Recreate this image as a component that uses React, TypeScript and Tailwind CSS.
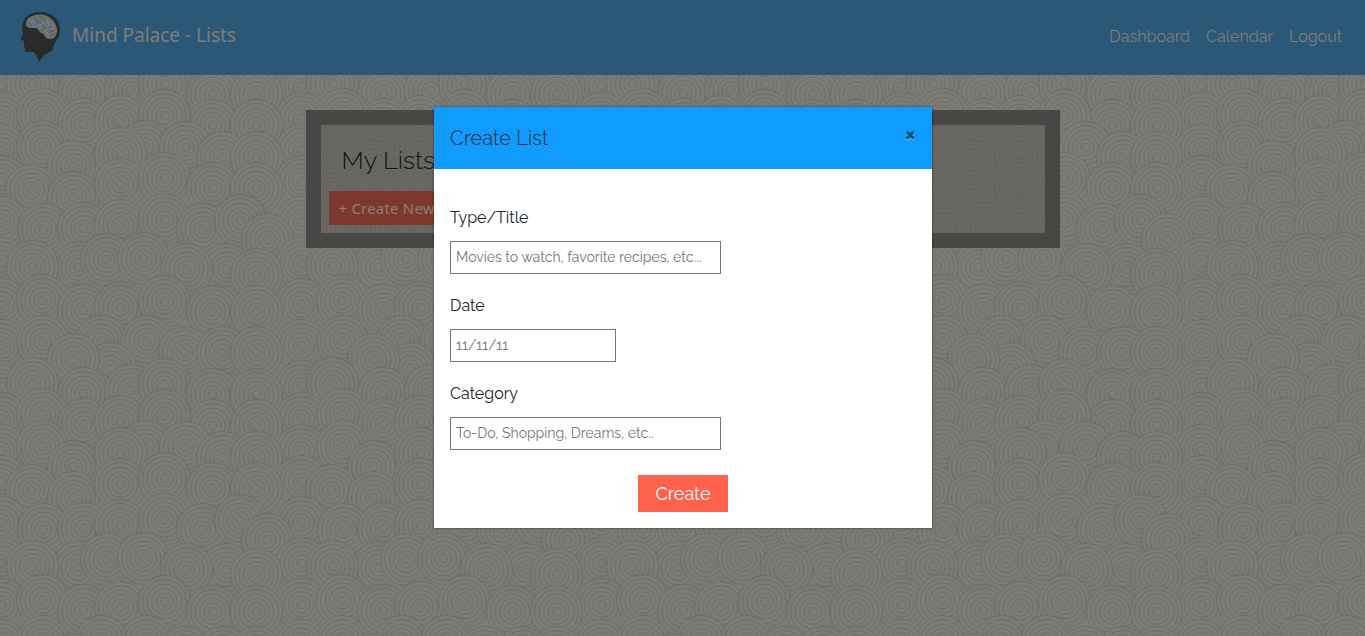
import React from "react";

type Ring = [number, number];

// Ring centres of one 300x300 wallpaper tile, listed from back to front.
const RINGS: Ring[] = [
  [1, 4], [42, 0], [83, 10], [120, 7], [164, 1], [212, 11], [256, 11],
  [1, 45], [42, 41], [101, 41], [146, 41], [110, 68], [184, 52], [222, 52], [256, 52], [73, 59],
  [1, 86], [32, 83], [83, 93], [130, 90], [164, 84], [212, 94], [256, 94],
  [1, 118], [42, 114], [83, 124], [120, 121], [212, 125], [164, 115], [256, 125],
  [1, 150], [42, 146], [145, 146], [185, 147], [73, 166], [120, 153], [222, 157], [256, 157],
  [1, 181], [31, 190], [73, 197], [120, 184], [164, 178], [212, 188], [256, 188],
  [1, 222], [43, 229], [83, 228], [120, 225], [164, 219], [202, 229], [240, 220], [267, 239],
  [1, 263], [78, 267], [32, 266], [106, 259], [143, 258], [226, 269], [186, 269], [256, 274],
];
const RADII = [26, 21.8, 17.3, 12.9, 8.6, 4.3];

function Wallpaper() {
  return (
    <svg className="absolute inset-0 h-full w-full" aria-hidden="true">
      <defs>
        <g id="ring">
          {RADII.map((r) => (
            <circle key={r} r={r} fill="#7d7b75" stroke="#6e6c67" strokeWidth="1" />
          ))}
        </g>
        <pattern id="rings" width="300" height="300" patternUnits="userSpaceOnUse">
          <rect width="300" height="300" fill="#7d7b75" />
          {[-300, 0, 300].map((dy) =>
            RINGS.map(([x, y], i) =>
              [300, -300, 0].map((dx) => (
                <use key={`${dy}-${i}-${dx}`} href="#ring" x={x + dx + 0.5} y={y + dy + 0.5} />
              )),
            ),
          )}
        </pattern>
      </defs>
      <rect width="100%" height="100%" fill="url(#rings)" />
    </svg>
  );
}

function Logo() {
  return (
    <svg className="mb-[2px] h-[52px] w-[42px]" viewBox="0 0 42 52" aria-hidden="true">
      <path
        d="M21 1C32 1 41 8 41 18.500C41 27 35 31 34 37.500L33.500 39.500L25 44L20.500 51L15 41L6.500 41L5.500 39L6 37L5 35L5 30L1.500 28.500L4 23L3 17C3.500 7 10 1 21 1Z"
        fill="#292b2a"
      />
      <path
        d="M7 13C7 7 13 3.500 21 3.500C29 3.500 36.500 9 38 18C39 24 35 28 31 28C27 28 26 25 24.500 23C21 22 20 19 18 17.500C15 16 13 18 10 16.500C8 16 7 15 7 13Z"
        fill="#6c7473"
      />
      <path d="M12 13l7-6 4 8-5 1zM29 10l6 6-6 2z" fill="#5c6f86" />
      <path d="M9 11l4 4M15 6l5 6M20 5l6 4M21 12l5 5M23 20l4-4M29 22l7-3M30 26l7-4" stroke="#4a5652" strokeWidth="0.9" fill="none" />
      <path d="M10 9l6 3M19 15l6-3M28 8l2 7M25 19l4 4M32 17l4 1" stroke="#858378" strokeWidth="1.1" fill="none" />
    </svg>
  );
}

function Field({ label, placeholder, width }: { label: string; placeholder: string; width: string }) {
  return (
    <div className="h-[88px]">
      <label className="block h-[35px] text-[16px] leading-[24px] text-[#202428]">{label}</label>
      <input
        className={`block h-[33px] border border-[#767676] bg-white px-[5px] pb-[2px] text-[14px] text-[#757575] outline-none placeholder:text-[#757575] ${width}`}
        placeholder={placeholder}
      />
    </div>
  );
}

export default function App() {
  return (
    <div className="relative h-[636px] w-full overflow-hidden bg-[#7d7b75] font-['Raleway','Open_Sans',sans-serif]">
      <Wallpaper />
      <header className="relative flex h-[75px] items-center justify-between bg-[#2c5878] pr-[23px] pl-[19px] text-[#807d77]">
        <div className="flex items-center">
          <Logo />
          <span className="mb-[4px] ml-[11px] font-['Noto_Sans'] text-[19px]">Mind Palace - Lists</span>
        </div>
        <nav className="mb-[2px] flex gap-4 text-[16px]">
          <a>Dashboard</a>
          <a>Calendar</a>
          <a>Logout</a>
        </nav>
      </header>
      <main className="relative mx-auto mt-[35px] h-[138px] w-[754px] border-[15px] border-[#474745] bg-[#575550]/50 pt-[17px] pl-[8px]">
        <h1 className="h-[49px] pl-[13px] text-[25.2px] leading-[36px] font-light text-[#121416]">My Lists</h1>
        <button className="block h-[34px] w-[150px] bg-[#7e372c] pl-[10px] text-left font-['Noto_Sans'] text-[15px] tracking-[0.2px] text-[#8f7f77]">+ Create New List</button>
      </main>
      <section className="absolute top-[107px] left-[434px] h-[421px] w-[498px] bg-white shadow-[0_0_2px_rgba(0,0,0,0.6)]">
        <header className="flex h-[62px] items-center justify-between bg-[#109cff] px-4">
          <h2 className="text-[20px] font-light tracking-[0.1px] text-[#20272b]">Create List</h2>
          <button className="mb-[9px] text-[24px] leading-none font-bold text-[#07527f] [text-shadow:0_1px_0_#7fcaff]">×</button>
        </header>
        <form className="px-4 pt-[37px]">
          <Field label="Type/Title" placeholder="Movies to watch, favorite recipes, etc..." width="w-[271px]" />
          <Field label="Date" placeholder="11/11/11" width="w-[166px]" />
          <Field label="Category" placeholder="To-Do, Shopping, Dreams, etc.." width="w-[271px]" />
          <button type="button" className="mx-auto mt-[5px] block h-[37px] w-[90px] bg-[#ff624c] text-[18px] text-white">Create</button>
        </form>
      </section>
    </div>
  );
}
